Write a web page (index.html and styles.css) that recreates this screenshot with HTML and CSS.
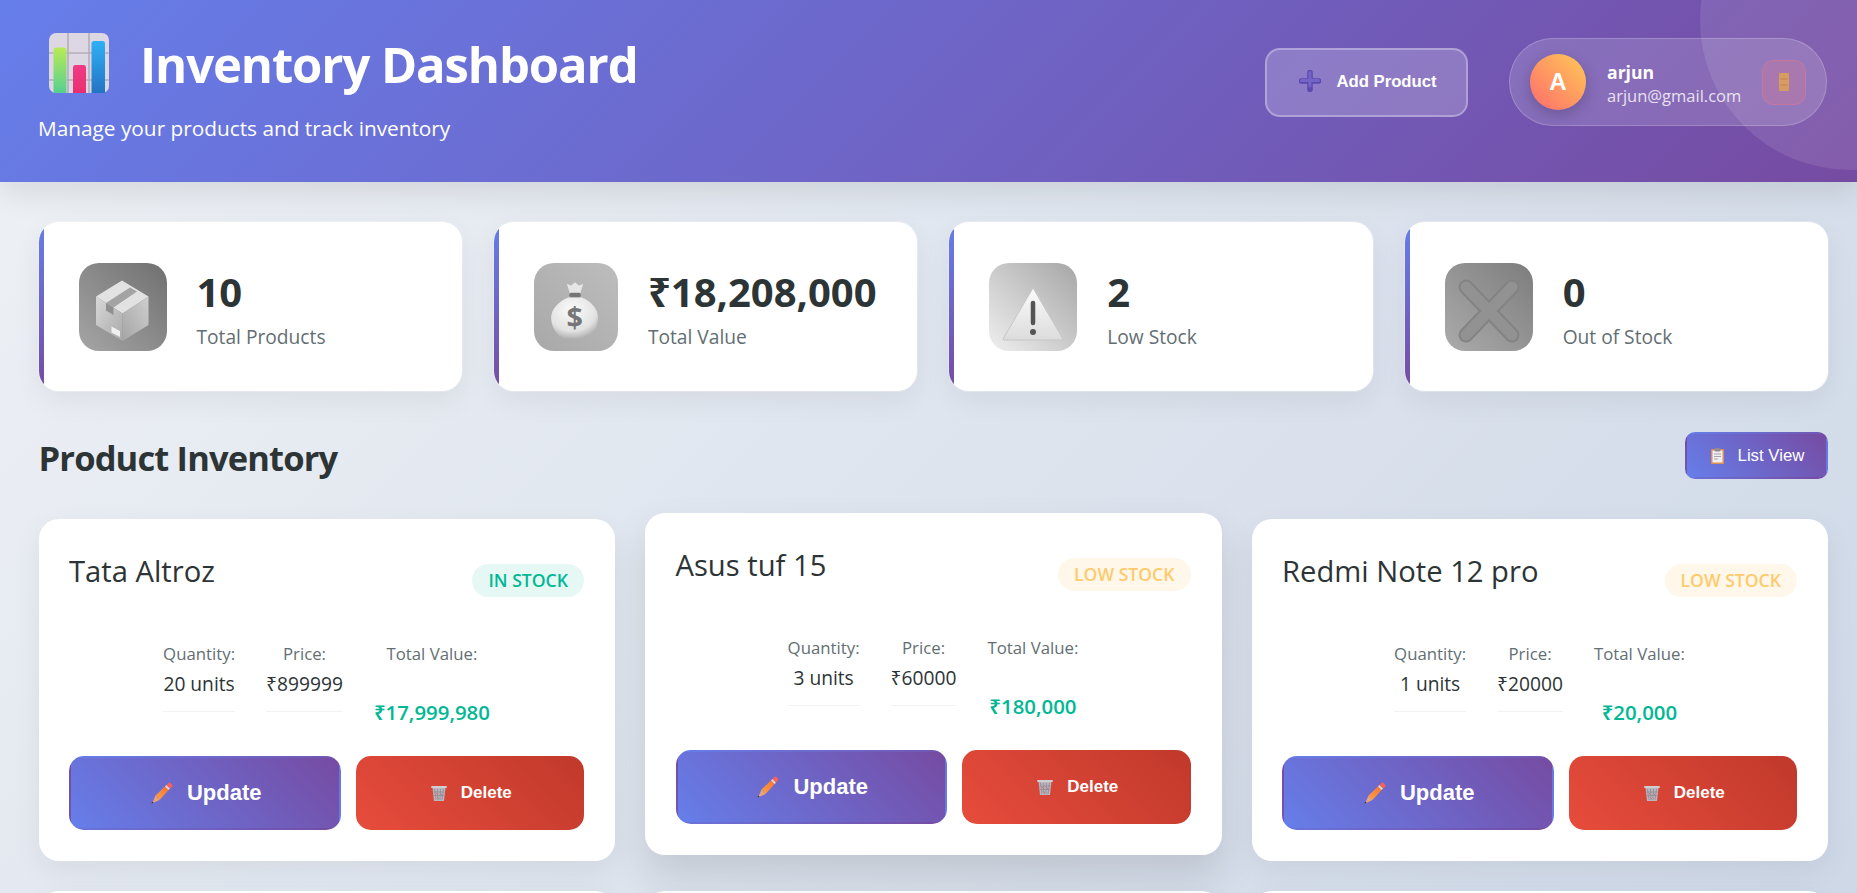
FILE: index.html
```html
<!DOCTYPE html>
<html lang="en">
<head>
	<meta charset="UTF-8">
	<title>Inventory Dashboard</title>
	<link rel="stylesheet" href="styles.css">
</head>
<body>

<header class="header">
	<div class="header-left">
		<div class="title-row">
			<svg class="chart-icon" viewBox="0 0 60 60">
				<defs>
					<linearGradient id="barGreen" x1="0" y1="0" x2="0" y2="1"><stop offset="0" stop-color="#b9ea55"/><stop offset="1" stop-color="#56cf91"/></linearGradient>
					<linearGradient id="barPink" x1="0" y1="0" x2="0" y2="1"><stop offset="0" stop-color="#f23a86"/><stop offset="1" stop-color="#e83070"/></linearGradient>
					<linearGradient id="barBlue" x1="0" y1="0" x2="0" y2="1"><stop offset="0" stop-color="#2fb0f5"/><stop offset="1" stop-color="#2274c4"/></linearGradient>
				</defs>
				<rect width="60" height="60" rx="7" fill="#dcd7e3"/>
				<path d="M0 20H60M0 47H60M19 0V60M40 0V60" stroke="#b3aeb8" stroke-width="1.6"/>
				<path d="M4.500 17a2.500 2.500 0 0 1 2.500-2.500h8a2.500 2.500 0 0 1 2.500 2.500V60H4.500z" fill="url(#barGreen)"/>
				<path d="M24 34.500a2.500 2.500 0 0 1 2.500-2.500h8a2.500 2.500 0 0 1 2.500 2.500V60H24z" fill="url(#barPink)"/>
				<path d="M42.500 10.500a2.500 2.500 0 0 1 2.500-2.500h8.500a2.500 2.500 0 0 1 2.500 2.500V60H42.500z" fill="url(#barBlue)"/>
			</svg>
			<h1>Inventory Dashboard</h1>
		</div>
		<p class="subtitle">Manage your products and track inventory</p>
	</div>
	<div class="header-right">
		<button class="add-btn">
			<svg class="plus-icon" viewBox="0 0 22 22">
				<path d="M11 2.500V19.500M2.500 11H19.500" stroke="#5c49ad" stroke-width="5.500" stroke-linecap="round"/>
				<path d="M11 2.500V16M2.500 10.500H19.500" stroke="#7464c8" stroke-width="3" stroke-linecap="round"/>
			</svg>
			Add Product
		</button>
		<div class="user-box">
			<div class="avatar">A</div>
			<div class="user-info">
				<div class="user-name">arjun</div>
				<div class="user-email">arjun@gmail.com</div>
			</div>
			<button class="logout-btn">
				<svg class="door-icon" viewBox="0 0 10 18">
					<rect width="10" height="18" rx="1" fill="#d39150"/>
					<path d="M1.500 6H8.500M1.500 12H8.500" stroke="#b57636" stroke-width="1"/>
				</svg>
			</button>
		</div>
	</div>
	<div class="header-circle"></div>
</header>

<main class="main">
	<section class="stats">
		<div class="stat-card">
			<div class="stat-icon stat-icon-box">
				<svg viewBox="0 0 88 88">
					<defs>
						<linearGradient id="boxLeft" x1="0" y1="0" x2="1" y2="1"><stop offset="0" stop-color="#d8d8d8"/><stop offset="1" stop-color="#a9a9a9"/></linearGradient>
						<linearGradient id="boxRight" x1="0" y1="1" x2="1" y2="0"><stop offset="0" stop-color="#a5a5a5"/><stop offset="1" stop-color="#cfcfcf"/></linearGradient>
					</defs>
					<path d="M43 17.500 69.500 33.500 43.500 50.500 17 33.500z" fill="#e2e2e2"/>
					<path d="M17 33.500 43.500 50.500V78L17 62z" fill="url(#boxLeft)"/>
					<path d="M69.500 33.500V62L43.500 78V50.500z" fill="url(#boxRight)"/>
					<path d="M27 40 51 24.500 58 28.500 34.500 44.500z" fill="#a3a3a3"/>
					<path d="M27 40 34.500 44.500V52L27 47.500z" fill="#8f8f8f"/>
					<path d="M32.500 63.500 41 68V74L32.500 69.500z" fill="#f0f0f0"/>
				</svg>
			</div>
			<div>
				<div class="stat-number">10</div>
				<div class="stat-label">Total Products</div>
			</div>
		</div>
		<div class="stat-card">
			<div class="stat-icon stat-icon-money">
				<svg viewBox="0 0 88 88">
					<defs>
						<radialGradient id="bagFill" cx="0.45" cy="0.3" r="0.8"><stop offset="0" stop-color="#fafafa"/><stop offset="0.65" stop-color="#e2e2e2"/><stop offset="1" stop-color="#9c9c9c"/></radialGradient>
					</defs>
					<path d="M34.500 20 39 21.500 43 18 47 21.500 51.500 20 48.500 29.500H37.500z" fill="#e6e6e6"/>
					<rect x="37" y="29" width="12" height="5" rx="2" fill="#767676"/>
					<path d="M36 34H50C60 38 67 46 67 55 67 68 58 77 50 77H35C27 77 18 68 18 55 18 46 26 38 36 34z" fill="url(#bagFill)"/>
					<text x="42.500" y="66" class="bag-sign">$</text>
				</svg>
			</div>
			<div>
				<div class="stat-number">₹18,208,000</div>
				<div class="stat-label">Total Value</div>
			</div>
		</div>
		<div class="stat-card">
			<div class="stat-icon stat-icon-warn">
				<svg viewBox="0 0 88 88">
					<defs>
						<linearGradient id="warnFill" x1="0" y1="0" x2="0" y2="1"><stop offset="0" stop-color="#fbfbfb"/><stop offset="1" stop-color="#dcdcdc"/></linearGradient>
					</defs>
					<path d="M44 25 74 76a1 1 0 0 1-1 1H15a1 1 0 0 1-1-1z" fill="url(#warnFill)" stroke="#c6c6c6" stroke-linejoin="round"/>
					<path d="M44 40V60" stroke="#555" stroke-width="4.500" stroke-linecap="round"/>
					<circle cx="44" cy="69" r="3" fill="#555"/>
				</svg>
			</div>
			<div>
				<div class="stat-number">2</div>
				<div class="stat-label">Low Stock</div>
			</div>
		</div>
		<div class="stat-card">
			<div class="stat-icon stat-icon-out">
				<svg viewBox="0 0 88 88">
					<path d="M21 24 67 72M67 24 21 72" stroke="#838383" stroke-width="15" stroke-linecap="round"/>
					<path d="M21 24 67 72M67 24 21 72" stroke="#929292" stroke-width="11" stroke-linecap="round"/>
				</svg>
			</div>
			<div>
				<div class="stat-number">0</div>
				<div class="stat-label">Out of Stock</div>
			</div>
		</div>
	</section>

	<div class="section-head">
		<h2>Product Inventory</h2>
		<button class="view-btn">
			<svg class="clip-icon" viewBox="0 0 13 16">
				<rect y="1" width="13" height="15" rx="1" fill="#df8f4f"/>
				<rect x="1.500" y="2.500" width="10" height="12" fill="#f2eff4"/>
				<rect x="3.500" width="6" height="3.500" rx="1" fill="#8f8a96"/>
				<path d="M3 6H10M3 8.500H10M3 11H7" stroke="#a8a3b0" stroke-width="1"/>
			</svg>
			List View
		</button>
	</div>

	<section class="products">
		<div class="product-card">
			<div class="product-head">
				<h3>Tata Altroz</h3>
				<span class="badge badge-in">IN STOCK</span>
			</div>
			<div class="details">
				<div class="detail">
					<span class="detail-label">Quantity:</span>
					<span class="detail-value">20 units</span>
				</div>
				<div class="detail">
					<span class="detail-label">Price:</span>
					<span class="detail-value">₹899999</span>
				</div>
				<div class="detail detail-total">
					<span class="detail-label">Total Value:</span>
					<span class="detail-value">₹17,999,980</span>
				</div>
			</div>
			<div class="actions">
				<button class="update-btn">
					<svg class="pencil-icon" viewBox="0 0 22 22"><use href="#pencil"/></svg>
					Update
				</button>
				<button class="delete-btn">
					<svg class="trash-icon" viewBox="0 0 16 16"><use href="#trash"/></svg>
					Delete
				</button>
			</div>
		</div>

		<div class="product-card lifted">
			<div class="product-head">
				<h3>Asus tuf 15</h3>
				<span class="badge badge-low">LOW STOCK</span>
			</div>
			<div class="details">
				<div class="detail">
					<span class="detail-label">Quantity:</span>
					<span class="detail-value">3 units</span>
				</div>
				<div class="detail">
					<span class="detail-label">Price:</span>
					<span class="detail-value">₹60000</span>
				</div>
				<div class="detail detail-total">
					<span class="detail-label">Total Value:</span>
					<span class="detail-value">₹180,000</span>
				</div>
			</div>
			<div class="actions">
				<button class="update-btn">
					<svg class="pencil-icon" viewBox="0 0 22 22"><use href="#pencil"/></svg>
					Update
				</button>
				<button class="delete-btn">
					<svg class="trash-icon" viewBox="0 0 16 16"><use href="#trash"/></svg>
					Delete
				</button>
			</div>
		</div>

		<div class="product-card">
			<div class="product-head">
				<h3>Redmi Note 12 pro</h3>
				<span class="badge badge-low">LOW STOCK</span>
			</div>
			<div class="details">
				<div class="detail">
					<span class="detail-label">Quantity:</span>
					<span class="detail-value">1 units</span>
				</div>
				<div class="detail">
					<span class="detail-label">Price:</span>
					<span class="detail-value">₹20000</span>
				</div>
				<div class="detail detail-total">
					<span class="detail-label">Total Value:</span>
					<span class="detail-value">₹20,000</span>
				</div>
			</div>
			<div class="actions">
				<button class="update-btn">
					<svg class="pencil-icon" viewBox="0 0 22 22"><use href="#pencil"/></svg>
					Update
				</button>
				<button class="delete-btn">
					<svg class="trash-icon" viewBox="0 0 16 16"><use href="#trash"/></svg>
					Delete
				</button>
			</div>
		</div>

		<div class="product-card next-row"></div>
		<div class="product-card next-row"></div>
		<div class="product-card next-row"></div>
	</section>
</main>

<svg class="sprites" width="0" height="0">
	<defs>
		<linearGradient id="pencilBody" x1="0" y1="1" x2="1" y2="0"><stop offset="0" stop-color="#ffa04a"/><stop offset="1" stop-color="#f4702a"/></linearGradient>
		<g id="pencil">
			<path d="M4.500 13.500 15.500 3 19 6.500 8.500 18z" fill="url(#pencilBody)"/>
			<path d="M4.500 13.500 8.500 18 1 21.500z" fill="#e9a27a"/>
			<path d="M1 19.800 2.700 20.600 0.700 21.700z" fill="#3a2a2a"/>
			<path d="M14 4.500 15.500 3 19 6.500 17.500 8z" fill="#d8d4dc"/>
			<path d="M15.500 3 17.800 0.800a1 1 0 0 1 1.400 0L21.300 3a1 1 0 0 1 0 1.400L19 6.500z" fill="#f8615a"/>
		</g>
		<g id="trash">
			<path d="M1.500 2.500H14.500L13 16H3z" fill="#b9b6bf"/>
			<path d="M3.500 4 5 15M6.500 4 7 15M9.500 4 9 15M12.500 4 11 15M2.500 7H13.500M3 10.500H13" stroke="#8e8a94" stroke-width="0.800"/>
			<path d="M5 8 7 10M9 8 11 10M6 12 8 14" stroke="#d9656a" stroke-width="0.800"/>
			<rect y="1" width="16" height="2" rx="1" fill="#d0cdd5"/>
		</g>
	</defs>
</svg>

</body>
</html>
```

FILE: styles.css
```css
* {
	box-sizing: border-box;
	margin: 0;
	padding: 0;
}
html {
	height: 100%;
	overflow: hidden;
}
body {
	height: 893px;
	overflow: hidden;
	font-family: "Open Sans", "Noto Sans", sans-serif;
	color: #2d3436;
	background: linear-gradient(135deg, #eff2f6 0%, #c3cfe2 100%);
	background-size: 100% 1800px;
	background-repeat: no-repeat;
}
button {
	font-family: "Liberation Sans", Arial, sans-serif;
	cursor: pointer;
}
.sprites {
	display: block;
}

/* header */
.header {
	height: 182px;
	padding: 33px 30px 0 38px;
	display: flex;
	justify-content: space-between;
	align-items: flex-start;
	color: #fff;
	background: linear-gradient(135deg, #667eea 0%, #764ba2 100%);
	box-shadow: 0 10px 30px rgba(0, 0, 0, 0.1);
	position: relative;
	overflow: hidden;
}
.header-circle {
	position: absolute;
	top: -130px;
	right: -143px;
	width: 300px;
	height: 300px;
	border-radius: 50%;
	background-color: rgba(255, 255, 255, 0.1);
}
.title-row {
	display: flex;
	align-items: center;
	gap: 31px;
	padding-left: 11px;
}
.chart-icon {
	width: 60px;
	height: 60px;
}
.header h1 {
	font-size: 49px;
	line-height: 60px;
	font-weight: 700;
	letter-spacing: -1.100px;
	padding-top: 1px;
	margin-bottom: -1px;
}
.subtitle {
	font-size: 20.800px;
	line-height: 28px;
	margin-top: 21px;
}
.header-right {
	display: flex;
	align-items: center;
	gap: 41px;
	margin-top: 5px;
}
.add-btn {
	width: 203px;
	height: 69px;
	display: flex;
	align-items: center;
	justify-content: center;
	gap: 15px;
	padding: 0 0 2px 3px;
	font-size: 16.700px;
	line-height: 17px;
	font-weight: 700;
	color: #fff;
	background-color: rgba(255, 255, 255, 0.2);
	border: 2px solid rgba(255, 255, 255, 0.3);
	border-radius: 15px;
}
.plus-icon {
	width: 22px;
	height: 22px;
}
.user-box {
	width: 318px;
	height: 88px;
	display: flex;
	align-items: center;
	padding: 0 20px;
	background-color: rgba(255, 255, 255, 0.15);
	border: 1px solid rgba(255, 255, 255, 0.2);
	border-radius: 44px;
}
.avatar {
	width: 56px;
	height: 56px;
	flex-shrink: 0;
	display: flex;
	align-items: center;
	justify-content: center;
	border-radius: 50%;
	font-family: "Liberation Sans", Arial, sans-serif;
	font-size: 24px;
	font-weight: 700;
	background: linear-gradient(45deg, #ff6b6b, #feca57);
	box-shadow: 0 5px 15px rgba(0, 0, 0, 0.2);
}
.user-info {
	margin-left: 21px;
	flex: 1;
	padding-top: 3px;
}
.user-name {
	font-size: 17.600px;
	line-height: 24px;
	font-weight: 700;
}
.user-email {
	font-size: 16.500px;
	line-height: 24px;
	opacity: 0.8;
}
.logout-btn {
	width: 44px;
	height: 45px;
	flex-shrink: 0;
	display: flex;
	align-items: center;
	justify-content: center;
	background-color: rgba(255, 107, 107, 0.2);
	border: 1px solid rgba(255, 107, 107, 0.3);
	border-radius: 12px;
}
.door-icon {
	width: 10px;
	height: 18px;
}

/* main */
.main {
	padding: 40px 29px 0 38.500px;
}
.stats {
	display: grid;
	grid-template-columns: repeat(4, 1fr);
	gap: 32px;
}
.stat-card {
	height: 169px;
	display: flex;
	align-items: center;
	gap: 30px;
	padding-left: 40px;
	background-color: #fff;
	border-radius: 20px;
	box-shadow: 0 0 0 1px rgba(255, 255, 255, 0.25), 0 10px 30px rgba(0, 0, 0, 0.06);
	position: relative;
	overflow: hidden;
}
.stat-card::before {
	content: "";
	position: absolute;
	left: 0;
	top: 0;
	bottom: 0;
	width: 5px;
	background: linear-gradient(180deg, #667eea, #764ba2);
}
.stat-icon {
	width: 88px;
	height: 88px;
	border-radius: 20px;
	flex-shrink: 0;
}
.stat-icon svg {
	display: block;
	width: 100%;
	height: 100%;
}
.stat-icon-box {
	background: linear-gradient(45deg, #a5a5a5, #707070);
}
.stat-icon-money {
	width: 84px;
	background: linear-gradient(45deg, #a8a8a8, #bdbdbd);
}
.stat-icon-warn {
	background: linear-gradient(45deg, #efefef, #a6a6a6);
}
.stat-icon-out {
	background: linear-gradient(45deg, #ababab, #7d7d7d);
}
.bag-sign {
	font-family: "Open Sans", sans-serif;
	font-size: 30px;
	font-weight: 700;
	fill: #767676;
	text-anchor: middle;
}
.stat-number {
	font-size: 40px;
	line-height: 54px;
	font-weight: 700;
}
.stat-label {
	font-size: 19.200px;
	line-height: 26px;
	color: #636e72;
	margin: 5px 0 -2px;
}
.section-head {
	height: 47px;
	display: flex;
	justify-content: space-between;
	align-items: center;
	margin: 41px 0 40px;
}
.section-head h2 {
	font-size: 34.500px;
	line-height: 47px;
	font-weight: 700;
	letter-spacing: -0.850px;
	padding-top: 3px;
}
.view-btn {
	width: 143px;
	height: 47px;
	display: flex;
	align-items: center;
	justify-content: center;
	gap: 14px;
	padding-left: 2px;
	font-size: 16.800px;
	color: #fff;
	background: linear-gradient(45deg, #667eea, #764ba2);
	border: 2px solid transparent;
	border-radius: 10px;
}
.clip-icon {
	width: 13px;
	height: 16px;
}

/* product cards */
.products {
	display: grid;
	grid-template-columns: repeat(3, 1fr);
	gap: 30px;
}
.product-card {
	height: 342px;
	padding: 29px 30px 0 29.500px;
	background-color: #fff;
	border: 1px solid rgba(255, 255, 255, 0.3);
	border-radius: 20px;
	box-shadow: 0 10px 30px rgba(0, 0, 0, 0.06);
}
.product-card.lifted {
	transform: translateY(-6px);
	box-shadow: 0 20px 40px rgba(0, 0, 0, 0.12);
}
.product-head {
	height: 62px;
	display: flex;
	justify-content: space-between;
	align-items: flex-start;
}
.product-head h3 {
	font-size: 29.200px;
	line-height: 44px;
	font-weight: 500;
}
.badge {
	height: 33px;
	line-height: 33px;
	margin-top: 15px;
	padding: 0 16px;
	border-radius: 17px;
	font-size: 17.600px;
	font-weight: 600;
}
.badge-in {
	color: #00b894;
	background-color: rgba(0, 184, 148, 0.1);
}
.badge-low {
	color: #fdcb6e;
	background-color: rgba(253, 203, 110, 0.15);
}
.details {
	display: flex;
	justify-content: center;
	align-items: flex-start;
	gap: 31px;
	margin-top: 31px;
	height: 114px;
}
.detail {
	display: flex;
	flex-direction: column;
	align-items: center;
	padding-bottom: 15px;
	border-bottom: 1px solid #f1f2f4;
}
.detail-label {
	font-size: 16.800px;
	line-height: 24px;
	color: #636e72;
}
.detail-value {
	font-size: 19.200px;
	line-height: 24px;
	margin-top: 6px;
}
.detail-total {
	border-bottom: 0;
}
.detail-total .detail-value {
	margin-top: 34px;
	font-size: 20.400px;
	font-weight: 600;
	color: #00b894;
}
.actions {
	display: grid;
	grid-template-columns: 271.500px 1fr;
	gap: 15px;
}
.update-btn,
.delete-btn {
	height: 74px;
	display: flex;
	align-items: center;
	justify-content: center;
	color: #fff;
	font-weight: 700;
	border-radius: 15px;
	padding-left: 3px;
}
.update-btn {
	gap: 14px;
	font-size: 22px;
	background: linear-gradient(45deg, #667eea, #764ba2);
	border: 2px solid transparent;
}
.delete-btn {
	gap: 14px;
	font-size: 17px;
	background: linear-gradient(45deg, #e74c3c, #c0392b);
	border: 0;
}
.pencil-icon {
	width: 22px;
	height: 22px;
}
.trash-icon {
	width: 16px;
	height: 16px;
}
```
